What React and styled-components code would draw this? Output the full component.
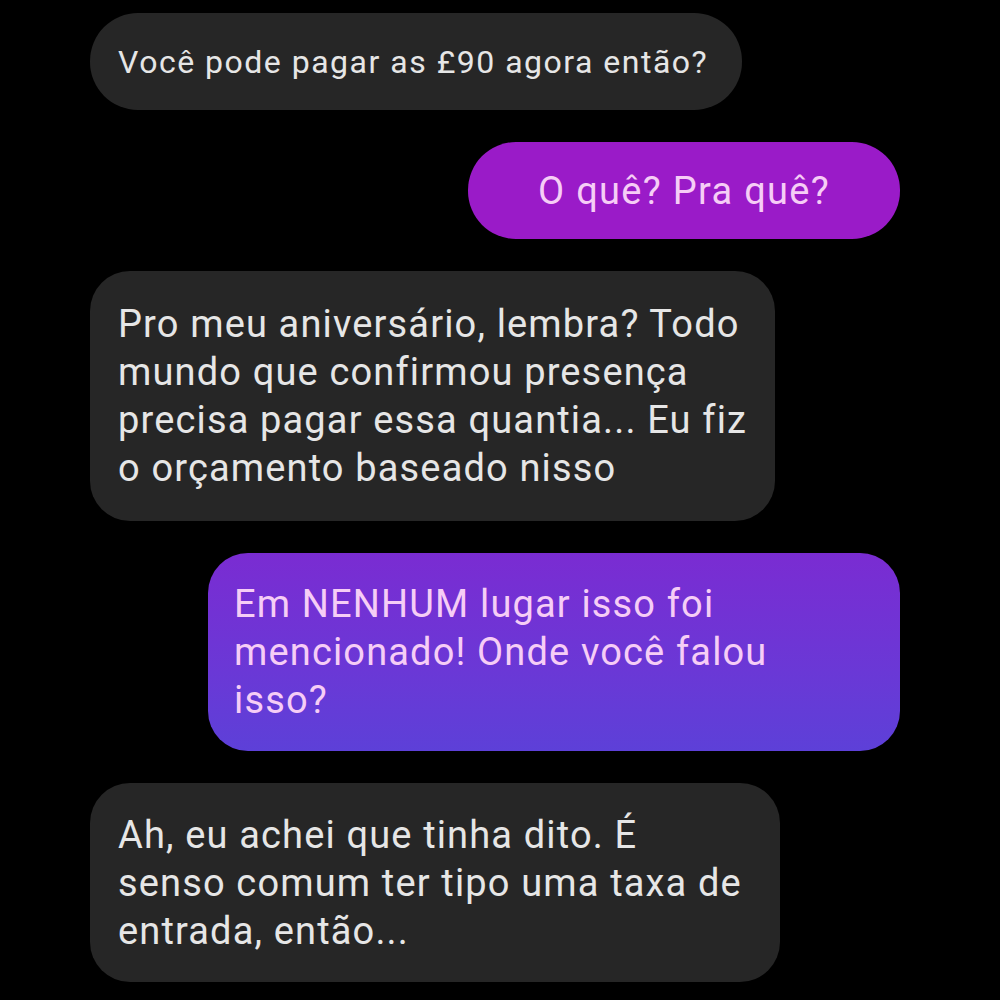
import React from 'react';
import styled, { createGlobalStyle } from 'styled-components';

const GlobalStyle = createGlobalStyle`
  html, body {
    margin: 0;
    padding: 0;
    background: #000;
  }
  body {
    font-family: Roboto, "Noto Sans", sans-serif;
  }
`;

const Thread = styled.div`
  width: 1000px;
  height: 1000px;
  box-sizing: border-box;
  padding: 13px 100px 0 90px;
  display: flex;
  flex-direction: column;
  gap: 32px;
  overflow: hidden;
  background: #000;
`;

const Bubble = styled.div`
  box-sizing: border-box;
  align-self: ${(p) => (p.$mine ? 'flex-end' : 'flex-start')};
  width: ${(p) => p.$width}px;
  min-height: ${(p) => p.$height}px;
  padding: ${(p) => p.$pad};
  border-radius: ${(p) => p.$radius}px;
  display: flex;
  flex-direction: column;
  justify-content: center;
  text-align: ${(p) => (p.$center ? 'center' : 'left')};
  font-size: ${(p) => p.$size}px;
  letter-spacing: ${(p) => p.$track}px;
  line-height: 48px;
  color: ${(p) => (p.$mine ? '#f6cdf6' : '#e6e6e6')};
  background: ${(p) => p.$bg};
`;

const Line = styled.span`
  display: block;
  white-space: nowrap;
`;

const GREY = '#262626';

const messages = [
  {
    lines: ['Você pode pagar as £90 agora então?'],
    width: 652, height: 97, pad: '0 28px', radius: 48, size: 32, track: 1.5, bg: GREY,
  },
  {
    mine: true, center: true,
    lines: ['O quê? Pra quê?'],
    width: 432, height: 97, pad: '0 30px', radius: 48, size: 38, track: 1.3,
    bg: '#9a1bc8',
  },
  {
    lines: [
      'Pro meu aniversário, lembra? Todo',
      'mundo que confirmou presença',
      'precisa pagar essa quantia... Eu fiz',
      'o orçamento baseado nisso',
    ],
    width: 685, height: 250, pad: '0 28px', radius: 40, size: 38, track: 1.15, bg: GREY,
  },
  {
    mine: true,
    lines: ['Em NENHUM lugar isso foi', 'mencionado! Onde você falou', 'isso?'],
    width: 692, height: 198, pad: '0 26px', radius: 40, size: 38, track: 1.15,
    bg: 'linear-gradient(180deg, #7a2cd2 0%, #6a38d6 60%, #5d40d8 100%)',
  },
  {
    lines: [
      'Ah, eu achei que tinha dito. É',
      'senso comum ter tipo uma taxa de',
      'entrada, então...',
    ],
    width: 690, height: 199, pad: '0 28px', radius: 40, size: 38, track: 1.15, bg: GREY,
  },
];

export default function App() {
  return (
    <>
      <GlobalStyle />
      <Thread>
        {messages.map((m, i) => (
          <Bubble
            key={i}
            $mine={m.mine}
            $center={m.center}
            $width={m.width}
            $height={m.height}
            $pad={m.pad}
            $radius={m.radius}
            $size={m.size}
            $track={m.track}
            $bg={m.bg}
          >
            {m.lines.map((l, j) => (
              <Line key={j}>{l}</Line>
            ))}
          </Bubble>
        ))}
      </Thread>
    </>
  );
}
